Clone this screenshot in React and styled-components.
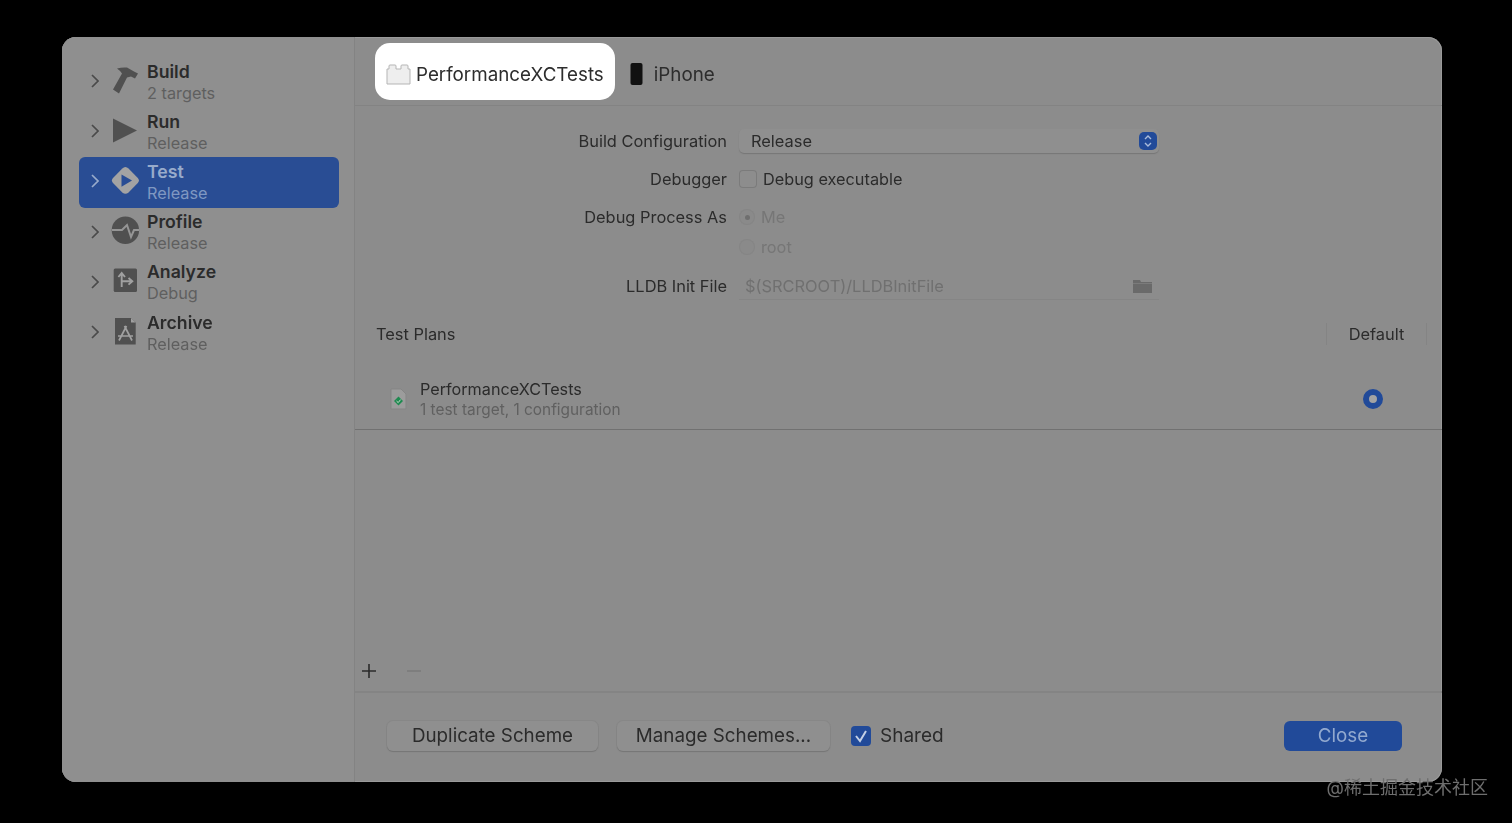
import React from "react";
import styled, { createGlobalStyle } from "styled-components";

const GlobalStyle = createGlobalStyle`
    html, body {
        margin: 0;
        height: 100%;
        background: #000;
        overflow: hidden;
    }
    body {
        font-family: "Inter", "Liberation Sans", "Noto Sans CJK SC", sans-serif;
    }
`;

const Page = styled.div`
    width: 1512px;
    height: 823px;
    padding: 37px 70px 41px 62px;
    box-sizing: border-box;
    background: #000;
    position: relative;
`;

const Window = styled.div`
    display: flex;
    width: 100%;
    height: 100%;
    background: #8c8c8c;
    border-radius: 14px;
    box-shadow: inset 0 0 0 1px #9a9a9a;
    overflow: hidden;
    filter: blur(0.6px);
`;

const Sidebar = styled.div`
    width: 293px;
    flex-shrink: 0;
    display: flex;
    flex-direction: column;
    padding: 20px 15px 0 17px;
    box-sizing: border-box;
    background: #8f8f8f;
    border-right: 1px solid #838383;
`;

const SideRow = styled.div`
    display: flex;
    align-items: center;
    height: 50.2px;
    flex-shrink: 0;
    border-radius: 6px;
    background: ${({ $active }) => ($active ? "#294d94" : "transparent")};
    color: ${({ $active }) => ($active ? "#98abcb" : "#2b2b2b")};
`;

const Chevron = styled.svg`
    width: 8px;
    height: 14px;
    margin: 0 0 2px 12px;
    flex-shrink: 0;
    fill: none;
    stroke: ${({ $active }) => ($active ? "#98abcb" : "#4a4a4a")};
    stroke-width: 1.7;
`;

const SideIcon = styled.svg`
    width: 30px;
    height: 30px;
    margin: 0 6px 3px 12px;
    flex-shrink: 0;
`;

const SideText = styled.div`
    display: flex;
    flex-direction: column;
    gap: 1px;
`;

const SideTitle = styled.div`
    font-size: 17.7px;
    line-height: 20px;
    font-weight: 600;
`;

const SideSub = styled.div`
    font-size: 16.3px;
    line-height: 20px;
    color: ${({ $active }) => ($active ? "#7f98c2" : "#5f5f5f")};
`;

const Main = styled.div`
    flex: 1;
    display: flex;
    flex-direction: column;
    min-width: 0;
`;

const TabBar = styled.div`
    height: 69px;
    flex-shrink: 0;
    display: flex;
    align-items: center;
    gap: 15px;
    padding: 0 0 0 20px;
    box-sizing: border-box;
    border-bottom: 1px solid #838383;
`;

const TargetTab = styled.div`
    display: flex;
    align-items: center;
    gap: 5px;
    height: 57px;
    padding: 5px ${({ $plain }) => ($plain ? "0" : "11px")} 0;
    box-sizing: border-box;
    margin-top: 1px;
    border-radius: 15px;
    background: ${({ $plain }) => ($plain ? "transparent" : "#fff")};
    color: #2d2d2d;
    font-size: 18.8px;
`;

const PhoneIcon = styled.svg`
    width: 13px;
    height: 22px;
    margin-right: 6px;
`;

const Form = styled.div`
    padding-top: 16px;
    display: flex;
    flex-direction: column;
`;

const FormRow = styled.div`
    display: grid;
    grid-template-columns: 372px 420px;
    column-gap: 12px;
    align-items: center;
    height: ${({ $h }) => $h}px;
`;

const Label = styled.div`
    text-align: right;
    font-size: 16.4px;
    color: #2b2b2b;
`;

const Control = styled.div`
    display: flex;
    align-items: center;
    gap: ${({ $muted }) => ($muted ? 5 : 6)}px;
    font-size: 16.3px;
    color: ${({ $muted }) => ($muted ? "#767676" : "#2b2b2b")};
`;

const Select = styled.div`
    display: flex;
    align-items: center;
    justify-content: space-between;
    height: 24px;
    margin-top: -1px;
    padding: 0 2px 0 12px;
    background: #8f8f8f;
    border-radius: 5px;
    box-shadow: 0 1px 1px #767676;
    font-size: 16.4px;
    color: #2b2b2b;
`;

const Stepper = styled.div`
    width: 18px;
    height: 18px;
    border-radius: 5px;
    background: #214a99;
    display: flex;
    align-items: center;
    justify-content: center;
`;

const CheckBox = styled.div`
    width: ${({ $size }) => $size || 18}px;
    height: ${({ $size }) => $size || 18}px;
    border-radius: 4px;
    background: ${({ $on }) => ($on ? "#214a99" : "#8d8d8d")};
    box-shadow: ${({ $on }) => ($on ? "none" : "inset 0 0 0 1px #7b7b7b")};
    display: flex;
    align-items: center;
    justify-content: center;
    flex-shrink: 0;
`;

const Radio = styled.div`
    width: 16px;
    height: 16px;
    margin-right: 1px;
    border-radius: 50%;
    background: #8a8a8a;
    box-shadow: inset 0 0 0 1px #858585;
    display: flex;
    align-items: center;
    justify-content: center;
    &::after {
        content: "";
        display: ${({ $on }) => ($on ? "block" : "none")};
        width: 5px;
        height: 5px;
        border-radius: 50%;
        background: #6f6f6f;
    }
`;

const PathField = styled.div`
    display: flex;
    align-items: center;
    justify-content: space-between;
    height: 26px;
    padding: 0 7px 0 6px;
    border-bottom: 1px solid #858585;
    font-size: 16.4px;
    color: #707070;
`;

const PlansHeader = styled.div`
    display: flex;
    align-items: center;
    justify-content: space-between;
    height: 40px;
    padding: 0 15px 0 21px;
    font-size: 16.4px;
    color: #2b2b2b;
`;

const DefaultColumn = styled.div`
    width: 99px;
    height: 22px;
    line-height: 22px;
    text-align: center;
    border-left: 1px solid #848484;
    border-right: 1px solid #848484;
`;

const PlanRow = styled.div`
    height: 76px;
    flex-shrink: 0;
    padding: 16px 59px 0 33px;
    box-sizing: border-box;
    display: flex;
    align-items: center;
    border-bottom: 1px solid #717171;
`;

const PlanIcon = styled.svg`
    width: 20px;
    height: 24px;
    margin: -2px 12px 0 0;
    flex-shrink: 0;
`;

const PlanText = styled.div`
    flex: 1;
    display: flex;
    flex-direction: column;
    gap: 1px;
`;

const PlanTitle = styled.div`
    font-size: 16.2px;
    line-height: 20px;
    color: #2b2b2b;
`;

const PlanSub = styled.div`
    font-size: 15.4px;
    line-height: 20px;
    color: #606060;
`;

const DefaultRadio = styled.div`
    width: 20px;
    height: 20px;
    margin-top: -2px;
    box-sizing: border-box;
    border-radius: 50%;
    border: 6px solid #214a99;
    background: #a3a3a3;
`;

const Spacer = styled.div`
    flex: 1;
`;

const AddBar = styled.div`
    height: 40px;
    flex-shrink: 0;
    display: flex;
    align-items: center;
    gap: 31px;
    padding: 0 0 2px 7px;
    box-sizing: border-box;
    border-bottom: 2px solid #848484;
`;

const BarIcon = styled.svg`
    width: 14px;
    height: 14px;
    stroke: ${({ $off }) => ($off ? "#7b7b7b" : "#2b2b2b")};
    stroke-width: 1.6;
`;

const Footer = styled.div`
    height: 89px;
    flex-shrink: 0;
    display: flex;
    align-items: center;
    padding: 0 40px 3px 32px;
    box-sizing: border-box;
`;

const Button = styled.div`
    width: ${({ $w }) => $w}px;
    height: 30px;
    padding-bottom: 2px;
    box-sizing: border-box;
    margin-right: ${({ $mr }) => $mr || 0}px;
    border-radius: 6px;
    display: flex;
    align-items: center;
    justify-content: center;
    font-size: 18.8px;
    background: ${({ $primary }) => ($primary ? "#214a99" : "#8f8f8f")};
    color: ${({ $primary }) => ($primary ? "#92a9cf" : "#2b2b2b")};
    box-shadow: ${({ $primary }) => ($primary ? "none" : "0 1px 1px #767676, 0 0 0 1px #878787")};
`;

const SharedLabel = styled.div`
    margin: 0 0 2px 9px;
    font-size: 19px;
    color: #2b2b2b;
`;

const Watermark = styled.div`
    position: absolute;
    right: 24px;
    bottom: 24px;
    font-size: 18px;
    line-height: 22px;
    color: #6e6e6e;
    font-family: "Inter", "Noto Sans CJK SC", sans-serif;
`;

const BuildIcon = () => (
    <SideIcon viewBox="0 0 30 30">
        <path d="M6 2.5 Q11 1 16 1.5 L23 5.5 L27 7.5 L24 12.5 L20 10.5 L16 11.5 L8 27.5 L2 23.5 L11 7.5 Q9 4.5 6 2.5 Z" fill="#505050" />
    </SideIcon>
);

const RunIcon = () => (
    <SideIcon viewBox="0 0 30 30">
        <path d="M2 2.5 L26 14.5 L2 26.5 Z" fill="#505050" />
    </SideIcon>
);

const TestIcon = () => (
    <SideIcon viewBox="0 0 30 30">
        <path d="M14.4 1 Q16 1 17.5 2.5 L26.8 12 Q29 14.5 26.8 17 L17.5 26.5 Q14.4 29 11.3 26.5 L2 17 Q-0.2 14.5 2 12 L11.3 2.5 Q12.8 1 14.4 1 Z" fill="#a3a3a3" />
        <path d="M10.5 8.5 L21 14.6 L10.5 20.7 Z" fill="#294d94" />
    </SideIcon>
);

const ProfileIcon = () => (
    <SideIcon viewBox="0 0 30 30">
        <circle cx="14.4" cy="14.2" r="13.7" fill="#505050" />
        <path d="M1 14 L11 14 L16 9 L20 21 L23 14 L28 14" fill="none" stroke="#959595" strokeWidth="2" />
    </SideIcon>
);

const AnalyzeIcon = () => (
    <SideIcon viewBox="0 0 30 30">
        <rect x="2.7" y="2.6" width="23.3" height="23.4" rx="1.5" fill="#505050" />
        <path d="M10.7 21 L10.7 8 M7.4 11 L10.7 7 L14 11 M10.7 15.3 L21 15.3 M17.5 12 L21.3 15.3 L17.5 18.6" fill="none" stroke="#a0a0a0" strokeWidth="1.9" />
    </SideIcon>
);

const ArchiveIcon = () => (
    <SideIcon viewBox="0 0 30 30">
        <path d="M4 1 L20 1 L24.7 5.5 L24.7 27.5 L4 27.5 Z" fill="#505050" />
        <path d="M20 1 L24.7 5.5 L20 5.5 Z" fill="#a0a0a0" />
        <path d="M8 23.5 L15.5 9 M21 23.5 L13.5 9 M7 19 L22 19" fill="none" stroke="#a0a0a0" strokeWidth="1.7" />
    </SideIcon>
);

const SCHEMES = [
    { title: "Build", sub: "2 targets", Icon: BuildIcon },
    { title: "Run", sub: "Release", Icon: RunIcon },
    { title: "Test", sub: "Release", Icon: TestIcon, active: true },
    { title: "Profile", sub: "Release", Icon: ProfileIcon },
    { title: "Analyze", sub: "Debug", Icon: AnalyzeIcon },
    { title: "Archive", sub: "Release", Icon: ArchiveIcon },
];

export default function App() {
    return (
        <Page>
            <GlobalStyle />
            <Window>
                <Sidebar>
                    {SCHEMES.map(({ title, sub, Icon, active }) => (
                        <SideRow key={title} $active={active}>
                            <Chevron viewBox="0 0 8 14" $active={active}>
                                <path d="M1 1 L7 7 L1 13" />
                            </Chevron>
                            <Icon />
                            <SideText>
                                <SideTitle>{title}</SideTitle>
                                <SideSub $active={active}>{sub}</SideSub>
                            </SideText>
                        </SideRow>
                    ))}
                </Sidebar>
                <Main>
                    <TabBar>
                        <TargetTab>
                            <svg width="25" height="21" viewBox="0 0 25 21">
                                <path d="M1 5 H3 V2 Q3 1 4 1 H9 Q10 1 10 2 V5 H15 V2 Q15 1 16 1 H21 Q22 1 22 2 V5 H24 V20 H1 Z" fill="#eeeeee" stroke="#b5b5b5" />
                            </svg>
                            PerformanceXCTests
                        </TargetTab>
                        <TargetTab $plain>
                            <PhoneIcon viewBox="0 0 13 22">
                                <rect x="0.5" y="0" width="12" height="22" rx="2" fill="#111" />
                            </PhoneIcon>
                            iPhone
                        </TargetTab>
                    </TabBar>
                    <Form>
                        <FormRow $h={38}>
                            <Label>Build Configuration</Label>
                            <Select>
                                Release
                                <Stepper>
                                    <svg width="10" height="14" viewBox="0 0 10 14" fill="none" stroke="#a9bbdb" strokeWidth="1.4">
                                        <path d="M2 5 L5 2 L8 5 M2 9 L5 12 L8 9" />
                                    </svg>
                                </Stepper>
                            </Select>
                        </FormRow>
                        <FormRow $h={38}>
                            <Label>Debugger</Label>
                            <Control>
                                <CheckBox />
                                Debug executable
                            </Control>
                        </FormRow>
                        <FormRow $h={38}>
                            <Label>Debug Process As</Label>
                            <Control $muted>
                                <Radio $on />
                                Me
                            </Control>
                        </FormRow>
                        <FormRow $h={22}>
                            <span />
                            <Control $muted>
                                <Radio />
                                root
                            </Control>
                        </FormRow>
                        <FormRow $h={56}>
                            <Label>LLDB Init File</Label>
                            <PathField>
                                $(SRCROOT)/LLDBInitFile
                                <svg width="19" height="14" viewBox="0 0 19 14">
                                    <path d="M0 1 H7 L8 3 H19 V14 H0 Z M0 4.5 V5 H19 V4.5 Z" fill="#6a6a6a" />
                                </svg>
                            </PathField>
                        </FormRow>
                    </Form>
                    <PlansHeader>
                        Test Plans
                        <DefaultColumn>Default</DefaultColumn>
                    </PlansHeader>
                    <PlanRow>
                        <PlanIcon viewBox="0 0 20 24">
                            <path d="M3 2 H13 L18 7 V22 H3 Z" fill="#9c9c9c" stroke="#858585" />
                            <path d="M10.5 9.5 L15 14 L10.5 18.5 L6 14 Z" fill="#1f8a50" />
                            <path d="M8.5 14 L10.2 15.6 L12.6 12.6" fill="none" stroke="#c8d8cc" strokeWidth="1" />
                        </PlanIcon>
                        <PlanText>
                            <PlanTitle>PerformanceXCTests</PlanTitle>
                            <PlanSub>1 test target, 1 configuration</PlanSub>
                        </PlanText>
                        <DefaultRadio />
                    </PlanRow>
                    <Spacer />
                    <AddBar>
                        <BarIcon viewBox="0 0 14 14">
                            <path d="M7 0 V14 M0 7 H14" />
                        </BarIcon>
                        <BarIcon viewBox="0 0 14 14" $off>
                            <path d="M0 7 H14" />
                        </BarIcon>
                    </AddBar>
                    <Footer>
                        <Button $w={211} $mr={19}>Duplicate Scheme</Button>
                        <Button $w={213} $mr={21}>Manage Schemes...</Button>
                        <CheckBox $on $size={20}>
                            <svg width="14" height="14" viewBox="0 0 14 14" fill="none" stroke="#c3d0e6" strokeWidth="2">
                                <path d="M2 7 L6 12 L12 2" />
                            </svg>
                        </CheckBox>
                        <SharedLabel>Shared</SharedLabel>
                        <Spacer />
                        <Button $w={118} $primary>Close</Button>
                    </Footer>
                </Main>
            </Window>
            <Watermark>@稀土掘金技术社区</Watermark>
        </Page>
    );
}
